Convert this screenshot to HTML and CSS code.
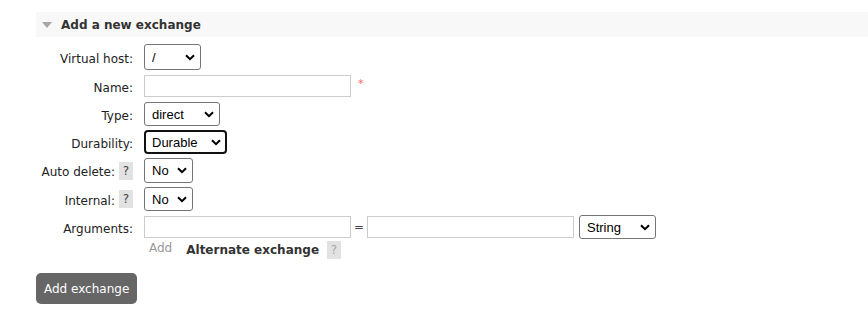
FILE: index.html
```html
<!DOCTYPE html>
<html lang="en">
<head>
    <meta charset="UTF-8">
    <meta name="viewport" content="width=device-width, initial-scale=1.0">
    <title>Add a new exchange</title>
    <link rel="stylesheet" href="styles.css">
</head>
<body>
    <div class="section">
        <h2 class="section-title"><span class="arrow"></span>Add a new exchange</h2>
        <form class="exchange-form" onsubmit="return false">
            <div class="form-grid">
                <label class="label" for="vhost">Virtual host:</label>
                <div class="field">
                    <select id="vhost" class="sel sel-vhost"><option>/</option></select>
                </div>

                <label class="label" for="name">Name:</label>
                <div class="field">
                    <input type="text" id="name" class="txt">
                    <span class="mand">*</span>
                </div>

                <label class="label" for="type">Type:</label>
                <div class="field">
                    <select id="type" class="sel sel-type">
                        <option>direct</option>
                        <option>fanout</option>
                        <option>headers</option>
                        <option>topic</option>
                    </select>
                </div>

                <label class="label" for="durable">Durability:</label>
                <div class="field">
                    <select id="durable" class="sel sel-durable focused">
                        <option>Durable</option>
                        <option>Transient</option>
                    </select>
                </div>

                <div class="label"><label for="auto_delete">Auto delete:</label><span class="help">?</span></div>
                <div class="field">
                    <select id="auto_delete" class="sel sel-yn sel-tall"><option>No</option><option>Yes</option></select>
                </div>

                <div class="label"><label for="internal">Internal:</label><span class="help">?</span></div>
                <div class="field">
                    <select id="internal" class="sel sel-yn"><option>No</option><option>Yes</option></select>
                </div>

                <label class="label" for="arg_key">Arguments:</label>
                <div class="field">
                    <input type="text" id="arg_key" class="txt">
                    <span class="eq">=</span>
                    <input type="text" id="arg_value" class="txt">
                    <select class="sel sel-argtype">
                        <option>String</option>
                        <option>Number</option>
                        <option>Boolean</option>
                        <option>List</option>
                    </select>
                </div>

                <div class="label"></div>
                <div class="field add-row">
                    <span class="add-link">Add</span>
                    <span class="arg-shortcut">Alternate exchange</span>
                    <span class="help help-light">?</span>
                </div>
            </div>
            <button type="submit" class="btn">Add exchange</button>
        </form>
    </div>
</body>
</html>
```

FILE: styles.css
```css
body {
    margin: 0;
    font-family: "DejaVu Sans", Verdana, sans-serif;
    font-size: 12px;
    color: #222;
    background: #fff;
}
.section {
    padding: 12px 0 0 36px;
}
.section-title {
    display: flex;
    align-items: center;
    height: 25px;
    margin: 0;
    padding-left: 6px;
    background: #f8f8f8;
    font-size: 12px;
    font-weight: bold;
    color: #333;
}
.arrow {
    width: 0;
    height: 0;
    margin: 1px 9px 0 0;
    border-left: 5px solid transparent;
    border-right: 5px solid transparent;
    border-top: 6px solid #a6a6a6;
}
.form-grid {
    display: grid;
    grid-template-columns: 97px auto;
    column-gap: 11px;
    row-gap: 4px;
    margin-top: 7px;
}
.label {
    display: flex;
    justify-content: flex-end;
    align-items: center;
    gap: 4px;
    padding-top: 3px;
    white-space: nowrap;
}
.label .help {
    margin-top: -3px;
}
.field {
    display: flex;
    align-items: center;
    min-height: 24px;
}
.txt {
    box-sizing: border-box;
    width: 207px;
    height: 22px;
    margin: 0;
    padding: 1px 3px;
    border: 1px solid #ccc;
    border-radius: 0;
    font: 13px "Liberation Sans", Arial, sans-serif;
}
.mand {
    margin-left: 7px;
    color: #f66;
    font-size: 11px;
    align-self: flex-start;
    margin-top: 3px;
}
.sel {
    box-sizing: border-box;
    height: 24px;
    margin: 0;
    padding: 0 20px 0 7px;
    border: 1px solid #767676;
    border-radius: 3px;
    background: #fff url("data:image/svg+xml,%3Csvg xmlns='http://www.w3.org/2000/svg' width='10' height='7' viewBox='0 0 10 7'%3E%3Cpath d='M1 1.2l4 4 4-4' fill='none' stroke='%23000' stroke-width='2'/%3E%3C/svg%3E") no-repeat right 5px center;
    color: #000;
    font: 13px "Liberation Sans", Arial, sans-serif;
    -webkit-appearance: none;
    appearance: none;
}
.sel-vhost { width: 57px; height: 26px; }
.sel-type { width: 76px; }
.sel-durable { width: 83px; }
.sel-yn { width: 49px; }
.sel-tall { height: 25px; }
.sel-argtype { width: 77px; margin-left: 5px; }
.focused {
    border: 2px solid #111;
    border-radius: 4px;
    padding-left: 6px;
    background-position: right 4px center;
}
.eq {
    width: 16px;
    text-align: center;
    color: #444;
}
.help {
    display: inline-flex;
    justify-content: center;
    align-items: center;
    width: 14px;
    height: 18px;
    background: #e2e2e2;
    color: #444;
    font-size: 12px;
}
.help-light {
    color: #aaa;
}
.add-row {
    min-height: 18px;
    margin-top: -2px;
    padding-left: 5px;
}
.add-link {
    color: #999;
    margin-right: 14px;
    align-self: flex-start;
}
.arg-shortcut {
    font-weight: bold;
    color: #333;
    margin-right: 8px;
}
.btn {
    margin-top: 14px;
    height: 31px;
    padding: 0 8px;
    border: none;
    border-radius: 5px;
    background: #666;
    color: #fff;
    font: 12px "DejaVu Sans", Verdana, sans-serif;
    cursor: pointer;
}
```
